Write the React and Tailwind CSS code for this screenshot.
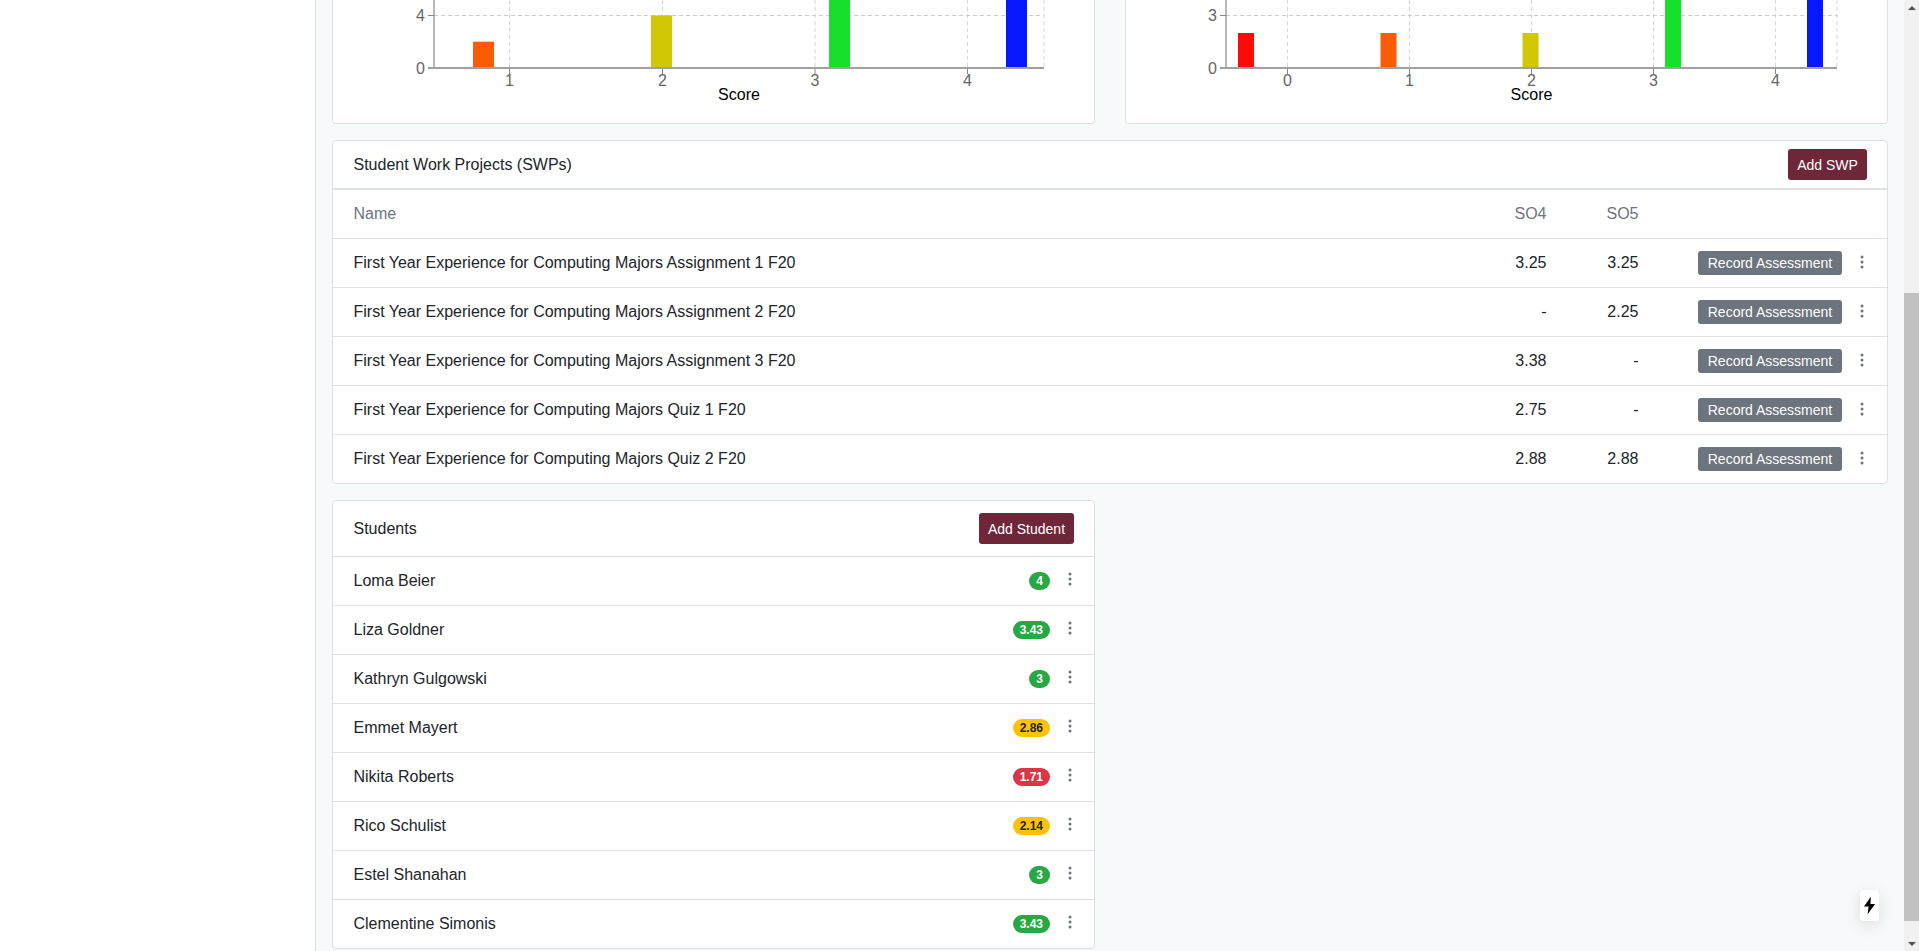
import React from 'react';
import { BsThreeDotsVertical } from 'react-icons/bs';

const swps = [
  { name: 'First Year Experience for Computing Majors Assignment 1 F20', so4: '3.25', so5: '3.25' },
  { name: 'First Year Experience for Computing Majors Assignment 2 F20', so4: '-', so5: '2.25' },
  { name: 'First Year Experience for Computing Majors Assignment 3 F20', so4: '3.38', so5: '-' },
  { name: 'First Year Experience for Computing Majors Quiz 1 F20', so4: '2.75', so5: '-' },
  { name: 'First Year Experience for Computing Majors Quiz 2 F20', so4: '2.88', so5: '2.88' },
];

const students = [
  { name: 'Loma Beier', score: '4', color: 'bg-[#28a745] text-white' },
  { name: 'Liza Goldner', score: '3.43', color: 'bg-[#28a745] text-white' },
  { name: 'Kathryn Gulgowski', score: '3', color: 'bg-[#28a745] text-white' },
  { name: 'Emmet Mayert', score: '2.86', color: 'bg-[#ffc107] text-[#212529]' },
  { name: 'Nikita Roberts', score: '1.71', color: 'bg-[#dc3545] text-white' },
  { name: 'Rico Schulist', score: '2.14', color: 'bg-[#ffc107] text-[#212529]' },
  { name: 'Estel Shanahan', score: '3', color: 'bg-[#28a745] text-white' },
  { name: 'Clementine Simonis', score: '3.43', color: 'bg-[#28a745] text-white' },
];

const BAR_COLORS = { red: '#ff0a0a', orange: '#fa5c05', yellow: '#d1c705', green: '#17e02c', blue: '#0518ff' };

// svg coordinates are relative to the card, which starts at the top of the viewport
const Chart = ({ axisX, endX, ticks, yLabel, bars }) => (
  <svg width="761" height="123" className="block">
    <line x1={axisX} x2={endX} y1="15.5" y2="15.5" stroke="#ccc" strokeDasharray="4 3" />
    {ticks.map((t) => (
      <g key={t.label}>
        <line x1={t.x} x2={t.x} y1="0" y2="67" stroke="#d4d4d4" strokeDasharray="4 3" />
        <line x1={t.x} x2={t.x} y1="68" y2="74" stroke="#888" />
        <text x={t.x} y="86" textAnchor="middle" fontSize="16" fill="#666">{t.label}</text>
      </g>
    ))}
    <line x1={endX} x2={endX} y1="0" y2="67" stroke="#d4d4d4" strokeDasharray="4 3" />
    {bars.map((b) => (
      <rect key={b.color} x={b.x} y={b.y} width={b.w} height={68 - b.y} fill={BAR_COLORS[b.color]} />
    ))}
    <line x1={axisX} x2={axisX} y1="0" y2="68" stroke="#a0a0a0" strokeWidth="1.5" />
    <line x1={axisX - 6} x2={axisX} y1="15.5" y2="15.5" stroke="#888" />
    <line x1={axisX - 6} x2={endX} y1="68" y2="68" stroke="#a0a0a0" strokeWidth="2" />
    <text x={axisX - 9} y="21" textAnchor="end" fontSize="16" fill="#666">{yLabel}</text>
    <text x={axisX - 9} y="74" textAnchor="end" fontSize="16" fill="#666">0</text>
    <text x={(axisX + endX) / 2} y="100" textAnchor="middle" fontSize="16" fill="#000">Score</text>
  </svg>
);

const Dots = () => (
  <button className="w-4 h-4 flex items-center justify-center text-[#6c757d] -mt-[3px]">
    <BsThreeDotsVertical size={16} />
  </button>
);

const Scrollbar = () => (
  <div className="w-[15px] shrink-0 h-full bg-[#f1f1f1] flex flex-col items-center">
    <div className="h-[15px] w-full flex items-center justify-center">
      <div className="w-0 h-0 border-x-[4px] border-x-transparent border-b-[4px] border-b-[#505050]" />
    </div>
    <div className="h-[278px] shrink-0" />
    <div className="w-full flex-1 bg-[#c1c1c1]" />
    <div className="h-[15px] mt-[15px] w-full flex items-center justify-center">
      <div className="w-0 h-0 border-x-[4px] border-x-transparent border-t-[4px] border-t-[#505050]" />
    </div>
  </div>
);

export default function App() {
  return (
    <div className="h-[951px] flex overflow-hidden bg-[#f8f9fa] text-[#212529] text-base font-['Liberation_Sans',Arial,sans-serif] relative">
      {/* Sidebar */}
      <div className="w-[316px] shrink-0 bg-white border-r border-[#dee2e6]" />

      {/* Main */}
      <div className="flex-1 min-w-0 px-4 flex flex-col gap-4">
        <div className="grid grid-cols-2 gap-x-[30px]">
          <div className="h-[124px] bg-white border border-t-0 border-[#dfdfdf] rounded-b">
            <Chart
              axisX={101}
              endX={711}
              yLabel="4"
              ticks={[
                { label: '1', x: 176.5 },
                { label: '2', x: 329.5 },
                { label: '3', x: 482 },
                { label: '4', x: 634.5 },
              ]}
              bars={[
                { color: 'orange', x: 140, y: 41.7, w: 21 },
                { color: 'yellow', x: 318, y: 15.4, w: 21 },
                { color: 'green', x: 496, y: 0, w: 21 },
                { color: 'blue', x: 673, y: 0, w: 21 },
              ]}
            />
          </div>
          <div className="h-[124px] bg-white border border-t-0 border-[#dfdfdf] rounded-b">
            <Chart
              axisX={100}
              endX={711}
              yLabel="3"
              ticks={[
                { label: '0', x: 161.5 },
                { label: '1', x: 283.5 },
                { label: '2', x: 405.5 },
                { label: '3', x: 527.5 },
                { label: '4', x: 649.5 },
              ]}
              bars={[
                { color: 'red', x: 112, y: 33, w: 16 },
                { color: 'orange', x: 254.5, y: 33, w: 16 },
                { color: 'yellow', x: 396.5, y: 33, w: 16 },
                { color: 'green', x: 539, y: 0, w: 16 },
                { color: 'blue', x: 681, y: 0, w: 16 },
              ]}
            />
          </div>
        </div>

        {/* SWPs */}
        <div className="bg-white border border-[#dfdfdf] rounded">
          <div className="flex items-center justify-between py-2 pl-[20.5px] pr-5">
            <span>Student Work Projects (SWPs)</span>
            <button className="h-[31px] w-[79px] bg-[#6f2639] text-white text-sm rounded-[3px]">Add SWP</button>
          </div>
          <div className="grid grid-cols-[1fr_92px_92px_248.5px] items-center h-[51px] border-t-2 border-b border-t-[#dee2e6] border-b-[#dee2e6] text-[#6c757d] pl-[20.5px]">
            <span>Name</span>
            <span className="text-right">SO4</span>
            <span className="text-right">SO5</span>
            <span />
          </div>
          {swps.map((swp, i) => (
            <div
              key={swp.name}
              className={`grid grid-cols-[1fr_92px_92px_248.5px] items-center pl-[20.5px] ${i < swps.length - 1 ? 'h-[49px] border-b border-[#dee2e6]' : 'h-[48px]'}`}
            >
              <span>{swp.name}</span>
              <span className="text-right">{swp.so4}</span>
              <span className="text-right">{swp.so5}</span>
              <div className="flex items-center justify-end gap-3 pr-[17px]">
                <button className="h-6 w-[144px] bg-[#6c757d] text-white text-sm rounded-[3px]">Record Assessment</button>
                <Dots />
              </div>
            </div>
          ))}
        </div>

        {/* Students */}
        <div className="grid grid-cols-2 gap-x-[30px]">
          <div className="bg-white border border-[#dfdfdf] rounded">
            <div className="flex items-center justify-between h-[56px] pl-[20.5px] pr-5 border-b border-[#dee2e6]">
              <span>Students</span>
              <button className="h-[31px] w-[95px] bg-[#6f2639] text-white text-sm rounded-[3px]">Add Student</button>
            </div>
            {students.map((s, i) => (
              <div
                key={s.name}
                className={`flex items-center pl-[20.5px] pr-4 ${i < students.length - 1 ? 'h-[49px] border-b border-[#dee2e6]' : 'h-[48px]'}`}
              >
                <span className="flex-1">{s.name}</span>
                <span className={`h-[18px] px-[7px] flex items-center rounded-full text-xs font-bold ${s.color}`}>{s.score}</span>
                <div className="ml-3 -mt-[2px]">
                  <Dots />
                </div>
              </div>
            ))}
          </div>
        </div>
      </div>

      <Scrollbar />

      {/* Dev indicator */}
      <div className="absolute left-[1860px] top-[890px] w-[19px] h-[31px] bg-white rounded shadow-[0_4px_16px_rgba(0,0,0,0.12)] flex items-center justify-center">
        <svg width="13" height="19" viewBox="0 0 14 20">
          <path d="M8.5 0.5 L1 11 L6 11 L5 19.5 L13 8.5 L8 8.5 Z" fill="#000" />
        </svg>
      </div>
    </div>
  );
}
